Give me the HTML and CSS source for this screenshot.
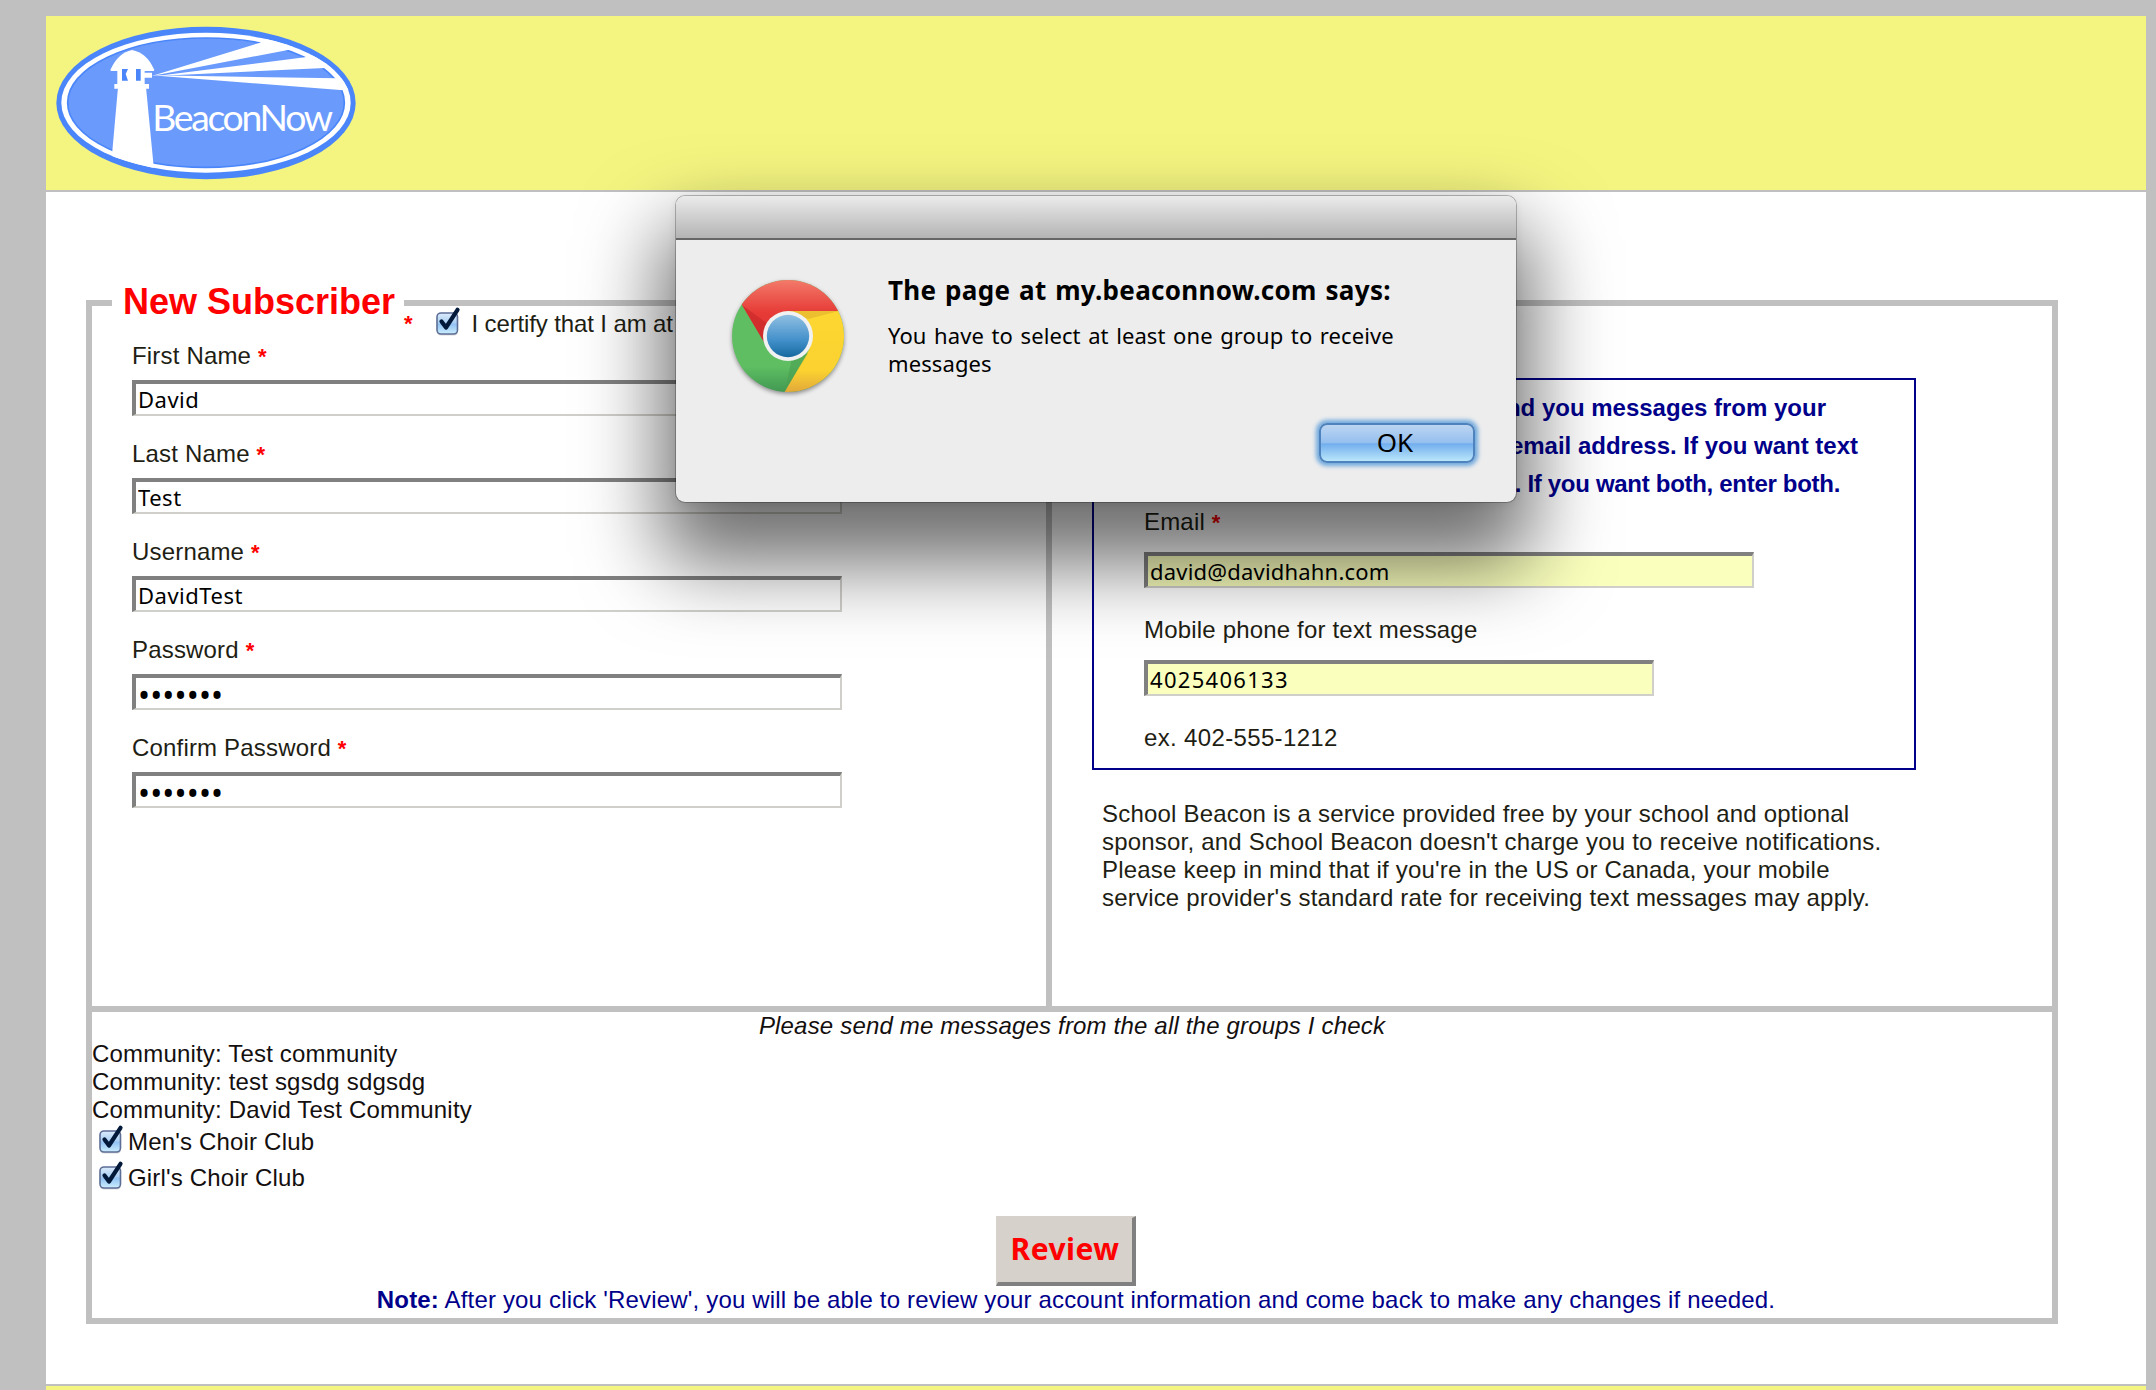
FILE: index.html
```html
<!DOCTYPE html>
<html lang="en">
<head>
<meta charset="utf-8">
<title>BeaconNow - New Subscriber</title>
<link rel="stylesheet" href="styles.css">
</head>
<body>
<svg width="0" height="0" class="defs" aria-hidden="true">
  <defs>
    <linearGradient id="boxFill" x1="0" y1="0" x2="0" y2="1">
      <stop offset="0" stop-color="#dcebfa"/><stop offset=".48" stop-color="#a9cff4"/><stop offset=".52" stop-color="#8fc1f2"/><stop offset="1" stop-color="#cdeefd"/>
    </linearGradient>
    <symbol id="check" viewBox="0 0 28 32">
      <rect x="2" y="8.5" width="21" height="21" rx="4" fill="#000" opacity=".15"/>
      <rect x="2" y="7" width="20.5" height="21" rx="4" fill="url(#boxFill)" stroke="#5d6e96" stroke-width="1.6"/>
      <path d="M6.5 15.500 L11 21.500 L22.500 3.800" fill="none" stroke="#03193a" stroke-width="4.2" stroke-linecap="round" stroke-linejoin="round"/>
    </symbol>
  </defs>
</svg>
<div class="page">
  <header class="banner">
    <svg class="logo" viewBox="168 78 900 462" role="img" aria-label="BeaconNow">
      <defs><clipPath id="oval"><ellipse cx="618" cy="308" rx="434" ry="210"/></clipPath></defs>
      <ellipse cx="618" cy="309" rx="449" ry="229" fill="#4a86fa"/>
      <ellipse cx="618" cy="308" rx="434" ry="210" fill="#fff"/>
      <ellipse cx="618" cy="308" rx="415" ry="194" fill="#6a9bfc" stroke="#4a86fa" stroke-width="5"/>
      <g clip-path="url(#oval)" fill="#fff">
        <path d="M455 228 L780 128 L800 110 L900 130 L868 149 Z"/>
        <path d="M470 228 L915 172 L960 160 L1010 204 L975 204 Z"/>
        <path d="M455 226 L1010 235 L1060 235 L1060 271 L1030 271 Z"/>
        <path d="M354 262 L438 262 L462 510 L332 510 Z"/>
        <path d="M332 208 Q355 158 396 150 Q440 158 462 208 L462 213 L332 213 Z"/>
        <path d="M352 208 h82 v48 h-82 Z M432 218 h24 v15 h-24 Z M343 252 h104 v14 h-104 Z"/>
      </g>
      <path d="M366 207 h18 l-7 15 l7 20 h-18 Z M408 207 h14 v35 h-14 Z" fill="#4a86fa"/>
      <text x="457" y="393" class="logo-text">BeaconNow</text>
    </svg>
  </header>

  <main class="content">
    <form class="subscriber">
      <div class="columns">
        <section class="account">
          <div class="legend-row">
            <h1 class="legend">New Subscriber</h1>
            <div class="certify"><span class="req">*</span><svg class="check"><use href="#check"/></svg><span class="certify-text">I certify that I am at</span></div>
          </div>
          <div class="field"><label>First Name <span class="req">*</span></label><input type="text" value="David"></div>
          <div class="field"><label>Last Name <span class="req">*</span></label><input type="text" value="Test"></div>
          <div class="field"><label>Username <span class="req">*</span></label><input type="text" value="DavidTest"></div>
          <div class="field"><label>Password <span class="req">*</span></label><input type="password" value="abcdefg"></div>
          <div class="field"><label>Confirm Password <span class="req">*</span></label><input type="password" value="abcdefg"></div>
        </section>
        <section class="contact">
          <div class="contact-box">
            <div class="intro"><p class="l1">send you messages from your</p><p class="l2">email address. If you want text</p><p class="l3">. If you want both, enter both.</p></div>
            <div class="contact-fields">
              <label>Email <span class="req">*</span></label>
              <input class="email" type="text" value="david@davidhahn.com">
              <label>Mobile phone for text message</label>
              <input class="phone" type="text" value="4025406133">
              <p class="hint">ex. 402-555-1212</p>
            </div>
          </div>
          <p class="rates">School Beacon is a service provided free by your school and optional<br>sponsor, and School Beacon doesn't charge you to receive notifications.<br>Please keep in mind that if you're in the US or Canada, your mobile<br>service provider's standard rate for receiving text messages may apply.</p>
        </section>
      </div>
      <section class="groups">
        <p class="prompt">Please send me messages from the all the groups I check</p>
        <p>Community: Test community</p>
        <p>Community: test sgsdg sdgsdg</p>
        <p>Community: David Test Community</p>
        <div class="group"><svg class="check"><use href="#check"/></svg><span>Men's Choir Club</span></div>
        <div class="group"><svg class="check"><use href="#check"/></svg><span>Girl's Choir Club</span></div>
        <button type="button" class="review">Review</button>
        <p class="note"><b>Note:</b> After you click 'Review', you will be able to review your account information and come back to make any changes if needed.</p>
      </section>
    </form>
  </main>
  <footer class="footer"></footer>
</div>

<div class="dialog" role="alertdialog">
  <div class="titlebar"></div>
  <div class="dialog-body">
    <svg class="chrome" viewBox="0 0 120 124">
      <defs>
        <linearGradient id="cr" x1="0" y1="0" x2="0" y2="1"><stop offset="0" stop-color="#f4826f"/><stop offset=".55" stop-color="#e73b37"/><stop offset="1" stop-color="#d9302f"/></linearGradient>
        <linearGradient id="cg" x1="0" y1="0" x2="0" y2="1"><stop offset="0" stop-color="#5fbe62"/><stop offset=".75" stop-color="#5fbe62"/><stop offset="1" stop-color="#3d9350"/></linearGradient>
        <linearGradient id="cy" x1="0" y1="0" x2="0" y2="1"><stop offset="0" stop-color="#fdd731"/><stop offset=".7" stop-color="#fbd230"/><stop offset="1" stop-color="#dda13c"/></linearGradient>
        <linearGradient id="cb" x1="0" y1="0" x2="0" y2="1"><stop offset="0" stop-color="#90bfe2"/><stop offset=".6" stop-color="#4390cb"/><stop offset="1" stop-color="#16699f"/></linearGradient>
        <clipPath id="disc"><circle cx="60" cy="60" r="56"/></clipPath>
      </defs>
      <g clip-path="url(#disc)">
        <rect width="120" height="120" fill="url(#cg)"/>
        <path d="M60 35 H120 V120 H54 L56.500 116 L81.500 73 Z" fill="url(#cy)"/>
        <path d="M0 0 H120 V35 H60 L36 66 L14 29 Z" fill="url(#cr)"/>
        <path d="M14 29 L36 66 L40 48 Z" fill="#cc2a2b" opacity=".7"/>
        <path d="M60 35 H111 L80 43 Z" fill="#e2b52f" opacity=".7"/>
        <path d="M80 77 L57 115 L64 82 Z" fill="#4a9e50" opacity=".6"/>
      </g>
      <circle cx="60" cy="60" r="25" fill="#f1f1f1"/>
      <circle cx="60" cy="60" r="21.200" fill="url(#cb)"/>
    </svg>
    <div class="message">
      <h2>The page at my.beaconnow.com says:</h2>
      <p>You have to select at least one group to receive<br>messages</p>
    </div>
  </div>
  <div class="actions"><button type="button" class="ok">OK</button></div>
</div>
</body>
</html>
```
FILE: styles.css
```css
* { box-sizing: border-box; }
body {
  margin: 0;
  height: 1390px;
  overflow: hidden;
  background: #c0c0c0;
  font: 24px/28px "Liberation Sans", Arial, sans-serif;
  letter-spacing: .18px;
  color: #1e1e14;
}
p, h1, h2 { margin: 0; }
.defs { position: absolute; }
.page {
  display: flex;
  flex-direction: column;
  width: 2100px;
  height: 1390px;
  margin-left: 46px;
  padding-top: 16px;
}
.banner {
  height: 176px;
  padding: 10px;
  background: #f4f580;
  border-bottom: 2px solid #c0c0c0;
}
.logo { display: block; width: 300px; height: 154px; overflow: visible; }
.logo-text { font-family: Lato, sans-serif; font-size: 112px; font-weight: 400; letter-spacing: -7px; fill: #fff; }
.content { height: 1192px; padding: 108px 88px 60px 40px; background: #fff; }
.footer { height: 6px; background: #f4f580; border-top: 2px solid #c0c0c0; }

.subscriber { width: 1972px; height: 1024px; border: 6px solid #c0c0c0; }
.columns { display: flex; height: 706px; border-bottom: 6px solid #c0c0c0; }
.account { width: 960px; border-right: 6px solid #c0c0c0; }
.legend-row { display: flex; align-items: flex-start; height: 61px; margin: -25px 0 0 20px; }
.legend {
  width: 292px;
  padding: 1px 0 0 11px;
  background: #fff;
  color: #f00;
  font-size: 36px;
  line-height: 40px;
  letter-spacing: 0;
  white-space: nowrap;
}
.certify { display: flex; padding-top: 29px; letter-spacing: -.12px; }
.certify .check { margin: -4px 8px 0 23px; }
.req { color: #f00; font-size: 22px; font-weight: bold; }
.check { width: 28px; height: 32px; flex: none; }
.field { display: flex; flex-direction: column; height: 98px; padding-left: 40px; }
.field input { width: 710px; }
label { display: block; height: 28px; margin-bottom: 10px; white-space: pre; }
input {
  display: block;
  height: 36px;
  margin: 0;
  padding: 0 2px;
  border-style: solid;
  border-width: 4px 2px 2px 4px;
  border-color: #808080 #d0cfca #d0cfca #808080;
  border-radius: 0;
  outline: 0;
  background: #fff;
  color: #000;
  font: 22px/28px "Noto Sans", sans-serif;
  letter-spacing: .5px;
}
input[type=password] { padding-top: 3px; font-size: 32px; letter-spacing: .15px; }
.contact { padding: 72px 0 0 40px; }
.contact-box { width: 824px; height: 392px; padding-top: 9px; border: 2px solid #00008b; }
.intro { color: #00008b; font-weight: bold; line-height: 38px; text-align: right; letter-spacing: 0; white-space: nowrap; }
.l1 { padding-right: 88px; }
.l2 { padding-right: 56px; }
.l3 { padding-right: 74px; letter-spacing: -.3px; }
.contact-fields { padding: 5px 0 0 50px; }
.contact-fields label { margin-bottom: 16px; }
.contact-fields input { margin-bottom: 28px; background: #faffbd; }
.email { width: 610px; letter-spacing: .2px; }
.phone { width: 510px; letter-spacing: 1.3px; }
.hint { letter-spacing: .35px; }
.rates { padding: 30px 0 0 10px; letter-spacing: .2px; white-space: nowrap; }

.groups { display: flex; flex-direction: column; height: 306px; color: #140f0f; }
.prompt { font-style: italic; text-align: center; }
.group { display: flex; align-items: flex-start; height: 36px; padding: 4px 0 0 6px; }
.group .check { margin: -4px 2px 0 0; }
.review {
  width: 140px;
  height: 70px;
  margin: 20px 0 0 904px;
  padding: 0 0 2px;
  border-style: solid;
  border-width: 2px 4px 4px 2px;
  border-color: #d6d1ca #808080 #808080 #d6d1ca;
  background: #d6d1ca;
  color: #f00;
  font: bold 30px/40px "Noto Sans", sans-serif;
  letter-spacing: .5px;
}
.note { padding-left: 8px; color: #00008b; text-align: center; letter-spacing: .17px; }

.dialog {
  position: absolute;
  left: 676px;
  top: 196px;
  width: 840px;
  height: 306px;
  border-radius: 9px;
  background: #ededed;
  box-shadow: 0 0 0 1px rgba(0,0,0,.25), 0 2px 10px rgba(0,0,0,.08), 0 47px 80px 15px rgba(0,0,0,.57);
  color: #000;
}
.titlebar {
  height: 44px;
  border-radius: 9px 9px 0 0;
  border-bottom: 2px solid #666;
  background: linear-gradient(#ebebeb, #b4b4b4);
}
.dialog-body { display: flex; height: 180px; padding: 36px 0 0 52px; }
.chrome { width: 120px; height: 124px; filter: drop-shadow(0 2px 2px rgba(0,0,0,.4)); }
.message { margin-top: -2px; padding-left: 40px; font: 22px/28px "Noto Sans", sans-serif; letter-spacing: .1px; word-spacing: 1.7px; white-space: nowrap; }
.message h2 { margin-bottom: 15px; font-size: 26px; line-height: 32px; letter-spacing: .3px; }
.actions { display: flex; padding: 3px 0 0 643px; }
.ok {
  width: 156px;
  height: 40px;
  padding: 0 4px 3px 0;
  border: 2px solid #4f83bd;
  border-radius: 8px;
  background: linear-gradient(#bdd5f2, #94bfee 50%, #72aeee 52%, #b9e6fa);
  box-shadow: 0 0 4px 3px #6fa9de;
  font: 26px/34px "Noto Sans", sans-serif;
}
```
